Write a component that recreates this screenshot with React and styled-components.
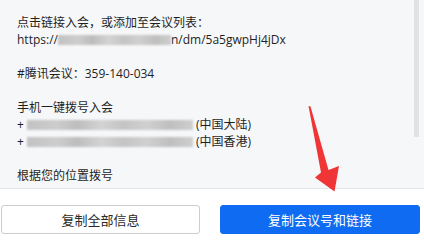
import React from 'react'
import styled, { createGlobalStyle } from 'styled-components'

const GlobalStyle = createGlobalStyle`
  html, body {
    margin: 0;
    padding: 0;
    background: #ffffff;
  }
  body {
    font-family: "Open Sans", "Noto Sans CJK SC", sans-serif;
  }
`

const Page = styled.div`
  position: relative;
  width: 424px;
  height: 238px;
  overflow: hidden;
  background: #ffffff;
`

const InfoPanel = styled.div`
  position: relative;
  height: 188px;
  border-bottom: 1px solid #e4e5e7;
  background: #f6f7f9;
  overflow: hidden;
`

const ScrollThumb = styled.div`
  position: absolute;
  top: 0;
  right: 5px;
  width: 5px;
  height: 137px;
  background: #e2e2e2;
`

const InfoText = styled.div`
  padding: 14px 0 0 17px;
  font-size: 12px;
  line-height: 17px;
  color: #1f1f1f;
`

const Line = styled.div`
  height: 17px;
  white-space: nowrap;
`

const Blur = styled.span`
  display: inline-block;
  width: ${({ $w }) => $w}px;
  height: 10px;
  margin: 0 ${({ $gap }) => $gap || 0}px;
  vertical-align: -1px;
  background: linear-gradient(
    90deg,
    #c2c2c2 0%,
    #cdcdcd 18%,
    #bdbdbd 30%,
    #d3d3d3 45%,
    #c4c4c4 58%,
    #d0d0d0 72%,
    #bfbfbf 86%,
    #cecece 100%
  );
  filter: blur(1.2px);
`

const ButtonRow = styled.div`
  display: flex;
  gap: 20px;
  padding: 16px 0 0 1px;
`

const Button = styled.button`
  width: ${({ $w }) => $w}px;
  height: 29px;
  box-sizing: border-box;
  border-radius: 3px;
  font-family: "Noto Sans CJK SC", sans-serif;
  font-size: 13px;
  cursor: pointer;
  border: 1px solid ${({ $primary }) => ($primary ? '#0f6cf2' : '#cdcdcd')};
  background: ${({ $primary }) => ($primary ? '#0f6cf2' : '#ffffff')};
  color: ${({ $primary }) => ($primary ? '#ffffff' : '#2b2b2b')};
`

const Arrow = styled.svg`
  position: absolute;
  left: 300px;
  top: 100px;
  pointer-events: none;
`

function PointerArrow() {
  // hand-drawn style red arrow pointing at the blue button
  return (
    <Arrow width="46" height="96" viewBox="300 100 46 96">
      <polygon
        points="308.5,106 310.5,106.5 328.5,170 339,166 334.5,191.5 315,177.5 321,172.5"
        fill="#ef3535"
      />
    </Arrow>
  )
}

export default function App() {
  return (
    <>
      <GlobalStyle />
      <Page>
        <InfoPanel>
          <InfoText>
            <Line>点击链接入会，或添加至会议列表：</Line>
            <Line>
              https://<Blur $w={113} />n/dm/5a5gwpHj4jDx
            </Line>
            <Line />
            <Line>#腾讯会议：359-140-034</Line>
            <Line />
            <Line>手机一键拨号入会</Line>
            <Line>
              +<Blur $w={166} $gap={3} />(中国大陆)
            </Line>
            <Line>
              +<Blur $w={166} $gap={3} />(中国香港)
            </Line>
            <Line />
            <Line>根据您的位置拨号</Line>
          </InfoText>
          <ScrollThumb />
        </InfoPanel>
        <ButtonRow>
          <Button $w={199}>复制全部信息</Button>
          <Button $w={200} $primary>复制会议号和链接</Button>
        </ButtonRow>
        <PointerArrow />
      </Page>
    </>
  )
}
